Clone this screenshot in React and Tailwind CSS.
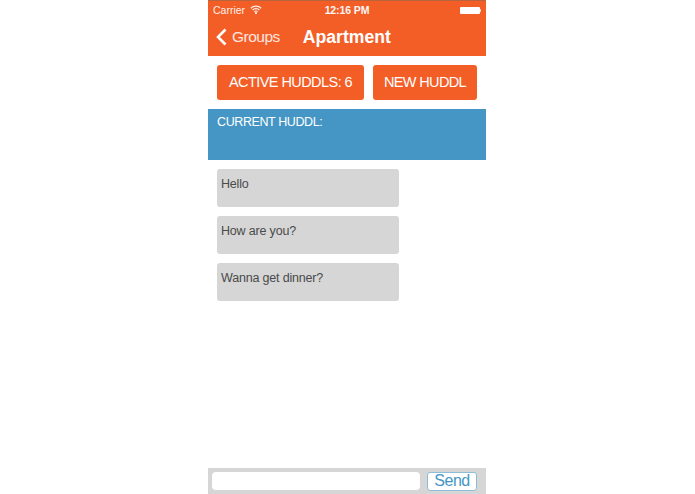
import React from "react";

const messages = ["Hello", "How are you?", "Wanna get dinner?"];

const App = () => {
  return (
    <div className="flex h-[494px] w-[695px] justify-center overflow-hidden bg-white font-['Liberation_Sans',sans-serif]">
      <div className="ml-[-1px] flex h-full w-[278px] flex-col bg-white">
        {/* status bar + nav */}
        <div className="h-14 shrink-0 border-t border-[#b8643f] bg-[#f35e27] text-white">
          <div className="flex h-[19px] items-center justify-between pl-[5px] pr-[5px] text-[10.5px]">
            <div className="flex w-[93px] items-center gap-[5px] opacity-90">
              <span>Carrier</span>
              <svg width="12" height="9" viewBox="0 0 12 9" fill="none" stroke="white" strokeWidth="1.2" className="mt-[-2px]">
                <path d="M0.8 3.2a7.4 7.4 0 0 1 10.4 0" />
                <path d="M2.6 5a4.8 4.8 0 0 1 6.8 0" />
                <path d="M4.3 6.7a2.4 2.4 0 0 1 3.4 0" />
                <circle cx="6" cy="8" r="0.5" fill="white" />
              </svg>
            </div>
            <span className="text-[10.5px] font-bold tracking-[-0.1px] opacity-95">12:16 PM</span>
            <div className="flex w-[93px] items-center justify-end">
              <div className="h-[7px] w-[20px] rounded-[1px] bg-white" />
              <div className="h-[3px] w-[1px] bg-white opacity-70" />
            </div>
          </div>
          <div className="flex h-[34px] items-center pl-[8px]">
            <svg width="11" height="18" viewBox="0 0 11 18" fill="none" stroke="white" strokeWidth="2.6">
              <path d="M9.5 1.5L2 9l7.5 7.5" />
            </svg>
            <span className="ml-[5px] text-[15.5px] tracking-[-0.5px] text-white/85">Groups</span>
            <span className="ml-[23px] text-[17.6px] font-bold">Apartment</span>
          </div>
        </div>

        {/* buttons */}
        <div className="flex shrink-0 gap-[9px] pl-[9px] pt-[9px]">
          <button className="h-[35px] w-[147px] rounded-[3px] bg-[#f35e27] text-[14.5px] tracking-[-0.56px] text-white">
            ACTIVE HUDDLS: 6
          </button>
          <button className="h-[35px] w-[104px] rounded-[3px] bg-[#f35e27] text-[14.5px] tracking-[-0.65px] text-white">
            NEW HUDDL
          </button>
        </div>

        {/* current huddl */}
        <div className="mt-[9px] h-[51px] shrink-0 bg-[#4596c5] pl-[9px] pt-[6px] text-[12.5px] leading-[15px] tracking-[-0.4px] text-white">
          CURRENT HUDDL:
        </div>

        {/* messages */}
        <div className="flex flex-1 flex-col gap-[9px] pl-[9px] pt-[9px]">
          {messages.map((msg) => (
            <div
              key={msg}
              className="h-[38px] w-[182px] rounded-[3px] bg-[#d6d6d6] pl-[4px] pt-[8px] text-[12.5px] leading-[15px] tracking-[-0.18px] text-[#4a4a4a]"
            >
              {msg}
            </div>
          ))}
        </div>

        {/* input bar */}
        <div className="flex h-[26px] shrink-0 items-center bg-[#d6d6d6] pl-[4px]">
          <input className="h-[18px] w-[208px] rounded-[4px] bg-white outline-none" />
          <button className="ml-[7px] flex h-[19px] w-[50px] items-center justify-center rounded-[3px] border border-[#8fbdd8] bg-white text-[16px] tracking-[-0.5px] text-[#4596c5]">
            Send
          </button>
        </div>
      </div>
    </div>
  );
};

export default App;
